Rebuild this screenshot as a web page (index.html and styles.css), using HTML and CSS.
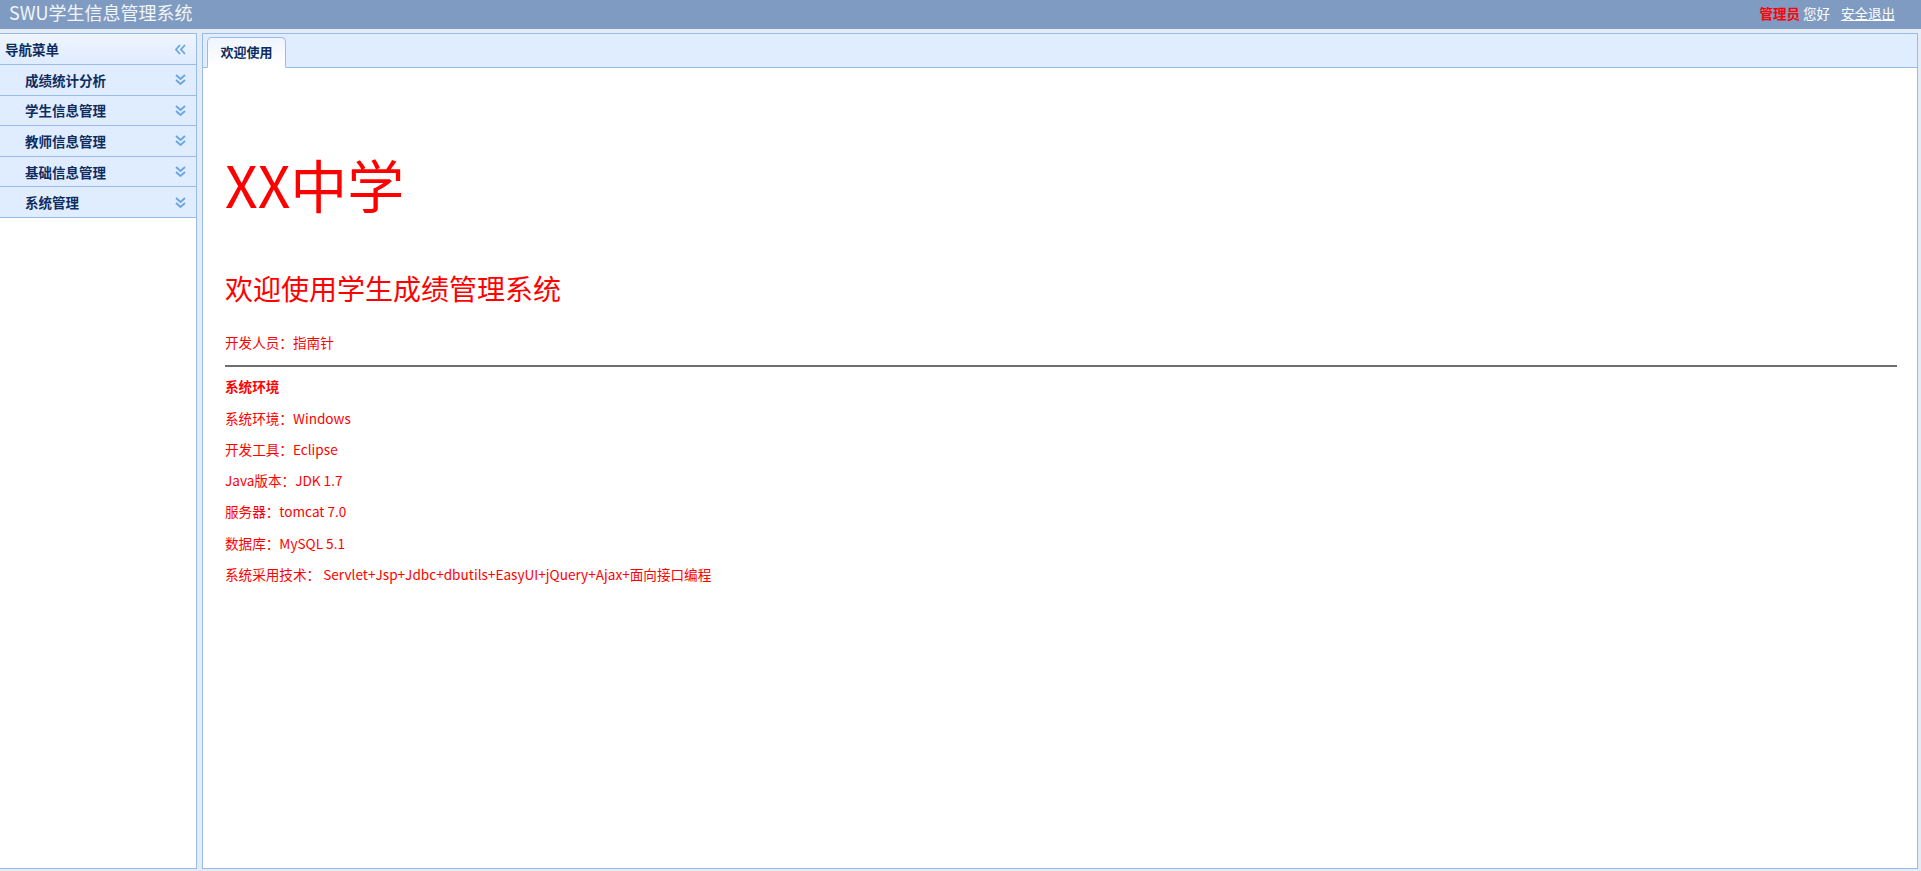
FILE: index.html
```html
<!DOCTYPE html>
<html lang="zh-CN">
<head>
    <meta charset="UTF-8">
    <title>SWU学生信息管理系统</title>
    <link rel="stylesheet" href="styles.css">
</head>
<body>

<!-- 顶部标题栏 -->
<div class="top">
    <span class="logo">SWU学生信息管理系统</span>
    <span class="user">
        <b class="role">管理员</b> 您好 <a href="#" class="logout">安全退出</a>
    </span>
</div>

<div class="main">
    <!-- 左侧导航 -->
    <div class="west">
        <div class="west-title">
            <span>导航菜单</span>
            <svg class="tool" width="11" height="11" viewBox="0 0 11 11">
                <path d="M5 1 L1 5.5 L5 10 M10 1 L6 5.5 L10 10" fill="none" stroke="#6aa5de" stroke-width="1.8"/>
            </svg>
        </div>
        <div class="menu">
            <div class="menu-item"><span>成绩统计分析</span><svg class="tool" width="11" height="11" viewBox="0 0 11 11"><path d="M1 1 L5.5 5 L10 1 M1 6 L5.5 10 L10 6" fill="none" stroke="#6aa5de" stroke-width="1.8"/></svg></div>
            <div class="menu-item"><span>学生信息管理</span><svg class="tool" width="11" height="11" viewBox="0 0 11 11"><path d="M1 1 L5.5 5 L10 1 M1 6 L5.5 10 L10 6" fill="none" stroke="#6aa5de" stroke-width="1.8"/></svg></div>
            <div class="menu-item"><span>教师信息管理</span><svg class="tool" width="11" height="11" viewBox="0 0 11 11"><path d="M1 1 L5.5 5 L10 1 M1 6 L5.5 10 L10 6" fill="none" stroke="#6aa5de" stroke-width="1.8"/></svg></div>
            <div class="menu-item"><span>基础信息管理</span><svg class="tool" width="11" height="11" viewBox="0 0 11 11"><path d="M1 1 L5.5 5 L10 1 M1 6 L5.5 10 L10 6" fill="none" stroke="#6aa5de" stroke-width="1.8"/></svg></div>
            <div class="menu-item"><span>系统管理</span><svg class="tool" width="11" height="11" viewBox="0 0 11 11"><path d="M1 1 L5.5 5 L10 1 M1 6 L5.5 10 L10 6" fill="none" stroke="#6aa5de" stroke-width="1.8"/></svg></div>
        </div>
    </div>

    <!-- 右侧内容 -->
    <div class="center">
        <div class="tabs">
            <div class="tab">欢迎使用</div>
        </div>
        <div class="panel">
            <h1 class="school">XX中学</h1>
            <h2 class="welcome">欢迎使用学生成绩管理系统</h2>
            <p>开发人员：指南针</p>
            <hr>
            <p><b>系统环境</b></p>
            <p>系统环境：Windows</p>
            <p>开发工具：Eclipse</p>
            <p>Java版本：JDK 1.7</p>
            <p>服务器：tomcat 7.0</p>
            <p>数据库：MySQL 5.1</p>
            <p>系统采用技术： Servlet+Jsp+Jdbc+dbutils+EasyUI+jQuery+Ajax+面向接口编程</p>
        </div>
    </div>
</div>

</body>
</html>
```

FILE: styles.css
```css
html, body {
    height: 100%;
}

body {
    margin: 0;
    font-family: "Noto Sans CJK SC", "Noto Sans", sans-serif;
    background-color: #e3ebf5;
    display: flex;
    flex-direction: column;
    overflow: hidden;
}

.top {
    height: 29px;
    background-color: #7f9bc1;
    display: flex;
    align-items: center;
    justify-content: space-between;
    padding: 0 26px 0 9px;
    flex-shrink: 0;
}

.logo {
    color: #f2f5fa;
    font-size: 18px;
    line-height: 22px;
    margin-top: -6px;
}

.user {
    color: #ffffff;
    font-size: 13.5px;
    margin-top: -4px;
}

.role {
    color: #ff0000;
}

.logout {
    color: #ffffff;
    margin-left: 8px;
}

.main {
    flex: 1;
    display: flex;
    gap: 5px;
    padding: 4px 3px 2px 0;
    min-height: 0;
}

/* left nav */
.west {
    width: 196px;
    background: #ffffff;
    border: 1px solid #99bbe8;
    border-left: none;
}

.west-title,
.menu-item {
    height: 30px;
    display: flex;
    align-items: center;
    justify-content: space-between;
    font-size: 13.5px;
    font-weight: bold;
    color: #0e2d5f;
    border-bottom: 1px solid #99bbe8;
}

.west-title {
    padding: 0 10px 0 5px;
    background: linear-gradient(#eff5ff, #e0ecff);
}

.menu-item {
    height: 29.6px;
    padding: 0 10px 0 25px;
    background-color: #e0ecff;
}

/* center */
.center {
    flex: 1;
    display: flex;
    flex-direction: column;
    border: 1px solid #99bbe8;
    background: #ffffff;
}

.tabs {
    height: 33px;
    background-color: #e0ecff;
    border-bottom: 1px solid #99bbe8;
    padding-left: 4px;
    display: flex;
    align-items: flex-end;
}

.tab {
    width: 77px;
    height: 29px;
    margin-bottom: -1px;
    border: 1px solid #99bbe8;
    border-bottom: 1px solid #ffffff;
    border-radius: 5px 5px 0 0;
    background: linear-gradient(#eff5ff, #ffffff);
    color: #0e2d5f;
    font-size: 13px;
    font-weight: bold;
    text-align: center;
    line-height: 28px;
}

.panel {
    flex: 1;
    padding: 0 20px 0 22px;
    color: #ff0000;
}

.school {
    font-size: 57px;
    font-weight: normal;
    line-height: 70px;
    margin: 80px 0 0;
}

.welcome {
    font-size: 28px;
    font-weight: normal;
    line-height: 36px;
    margin: 52px 0 21px;
}

.panel p {
    font-size: 13.6px;
    line-height: 31.3px;
    margin: 0;
}

.panel hr {
    border: none;
    border-top: 2px solid #6f6f6f;
    margin: 7px 0 4px;
}
```
